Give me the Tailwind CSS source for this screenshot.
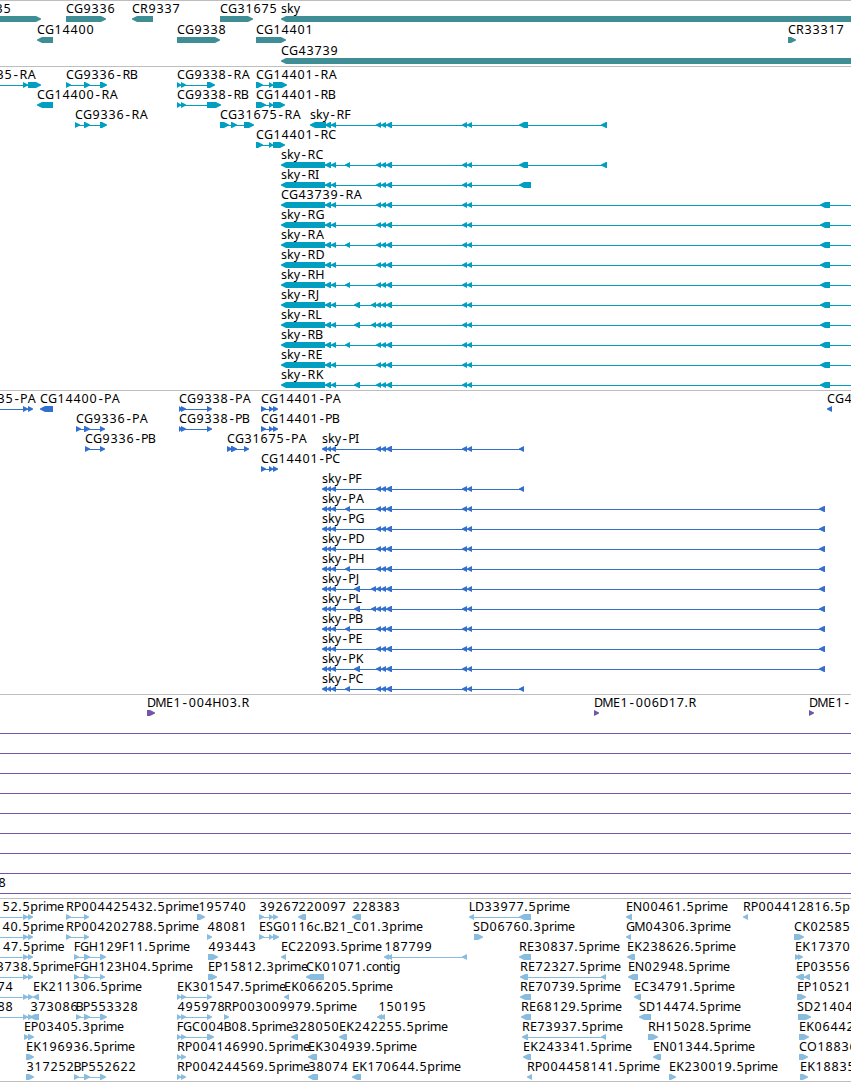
<!DOCTYPE html>
<html lang="en">
<head>
<meta charset="utf-8">
<title>Genome browser</title>
<script src="https://cdn.jsdelivr.net/npm/@tailwindcss/browser@4"></script>
</head>
<body class="bg-white overflow-hidden">
<main id="tracks" class="flex flex-col w-[851px] h-[1082px] overflow-hidden border-b border-[#bebebe] font-['Noto_Sans',sans-serif] text-[12.5px] text-black">
  <section data-track="genes" class="h-[66px] shrink-0 border-t border-[#bebebe] text-[#408e95]"></section>
  <section data-track="transcripts" class="h-[324px] shrink-0 border-t border-[#bebebe] text-[#009fc2]"></section>
  <section data-track="proteins" class="h-[304px] shrink-0 border-t border-[#bebebe] text-[#336fcd]"></section>
  <section data-track="bacs" class="h-[204px] shrink-0 border-t border-[#bebebe] text-[#7356a8]"></section>
  <section data-track="ests" class="h-[183px] shrink-0 border-t border-[#bebebe] text-[#88bddf]"></section>
</main>
<script>
// Feature format: "<strand> <label>@<x> start-end,start-end"; "~" marks a line running past the left edge, "+" past the right edge.
const T = '325-331,331-336', TRIO = '376-381,381-386,386-392', DUO = '462-467,467-472', L = '~,23-28,28-33';
const far = (n, extra = '', t2 = '') => `< ${n}@281 281-325,${T}${extra},${t2}${TRIO},${DUO},820-830,+`;
const P0 = '322-327,327-331,331-336';
const prot = (n, extra, t2, end) => `< ${n}@322 ${P0}${extra},${t2}${TRIO},${DUO},${end}`;
const A = ',345-350', B = ',354-360', C = '371-376,';
const data = {
  genes: [
    ['> 35@-5 -10-41', '> CG9336@66 66-106', '< CR9337@132 132-153', '> CG31675@220 220-253', '< sky@281 281-870'],
    ['< CG14400@37 37-53', '> CG9338@177 177-220', '> CG14401@256 256-286', '> CR33317@788 788-796'],
    ['< CG43739@281 281-870']
  ],
  transcripts: [
    ['> 35-RA@-4 ~,23-28,28-41', '> CG9336-RB@66 66-71,84-90,100-107', '> CG9338-RA@177 177-181,181-186,207-215', '> CG14401-RA@256 256-263,269-273,273-287'],
    ['< CG14400-RA@37 37-53', '> CG9338-RB@177 177-181,181-186,207-221', '> CG14401-RB@256 256-266,269-273,273-285'],
    ['> CG9336-RA@75 75-80,84-90,100-107', '> CG31675-RA@220 220-229,231-237,244-254', `< sky-RF@310 310-326,${T},${TRIO},${DUO},519-528,601-607`],
    ['> CG14401-RC@256 256-263,269-273,273-285'],
    [`< sky-RC@281 281-325,${T}${A},${TRIO},${DUO},519-528,601-607`],
    [`< sky-RI@281 281-325,${T},${TRIO},${DUO},519-531`],
    [far('CG43739-RA')], [far('sky-RG')], [far('sky-RA', A)], [far('sky-RD')], [far('sky-RH', A)],
    [far('sky-RJ', B, C)], [far('sky-RL', B, C)], [far('sky-RB', A)], [far('sky-RE')], [far('sky-RK', B)]
  ],
  proteins: [
    ['> 35-PA@-3 ' + L, '< CG14400-PA@40 40-53', '> CG9338-PA@179 179-182,181-186,207-212', '> CG14401-PA@261 261-266,269-273,273-278', '< CG4@827 827-832'],
    ['> CG9336-PA@76 76-81,84-90,100-105', '> CG9338-PB@179 179-182,181-186,207-212', '> CG14401-PB@261 261-266,269-273,273-278'],
    ['> CG9336-PB@85 85-90,100-105', '> CG31675-PA@227 227-232,231-237,244-249', prot('sky-PI', '', '', '519-524')],
    ['> CG14401-PC@261 261-266,269-273,273-278'],
    [prot('sky-PF', '', '', '519-524')],
    [prot('sky-PA', A, '', '819-825')], [prot('sky-PG', '', '', '819-825')], [prot('sky-PD', '', '', '819-825')],
    [prot('sky-PH', A, '', '819-825')], [prot('sky-PJ', B, C, '819-825')], [prot('sky-PL', B, C, '819-825')],
    [prot('sky-PB', A, '', '819-825')], [prot('sky-PE', '', '', '819-825')], [prot('sky-PK', B, '', '819-825')],
    [prot('sky-PC', A, '', '519-524')]
  ],
  bacs: [
    ['> DME1-004H03.R@147 147-155', '> DME1-006D17.R@594 594-599', '> DME1-@809 809-814'],
    ['> @0 ~,+'], ['> @0 ~,+'], ['> @0 ~,+'], ['> @0 ~,+'], ['> @0 ~,+'], ['> @0 ~,+'], ['> @0 ~,+'], ['> @0 ~,+'], ['> 8@-2 ~,+']
  ],
  ests: [
    ['> 52.5prime@2 ' + L, '> RP004425432.5prime@66 66-71,84-89', '> 195740@198 197-205', '> 39267@259 259-264,269-273,273-278', '< 220097@298 298-306', '< 228383@352 352-361', '< LD33977.5prime@469 469-474,519-531', '< EN00461.5prime@626 626-632', '< RP004412816.5p@743 743-748'],
    ['> 40.5prime@2 ' + L, '> RP004202788.5prime@66 66-71,84-89', '> 48081@207 207-212', '> ESG0116c.B21_C01.3prime@259 259-264,269-273,273-279', '> SD06760.3prime@473 474-483', '< GM04306.3prime@626 626-631', '> CK02585@794 794-804'],
    ['> 147.5prime@-5.5 ' + L, '> FGH129F11.5prime@74 74-79,84-90,100-106', '> 493443@208 208-218', '< EC22093.5prime@281 281-286', '< 187799@384 384-389,387-392,462-467', '< RE30837.5prime@519 519-531', '< EK238626.5prime@627 627-635', '> EK17370@795 795-800,798-803'],
    ['> 3738.5prime@-4 ' + L, '> FGH123H04.5prime@74 74-79,84-90,100-105', '> EP15812.3prime@208 208-217', '< CK01071.contig@306 306-324', '< RE72327.5prime@520 520-528,601-606', '< EN02948.5prime@628 628-638', '< EP03556@796 796-804,804-810'],
    ['> 74@-3 ' + L, '< EK211306.5prime@33 33-39', '> EK301547.5prime@177 177-181,181-186,207-212', '< EK066205.5prime@284 284-289', '< RE70739.5prime@520 520-531', '< EC34791.5prime@634 634-641', '> EP10521@797 797-806'],
    ['> 88@-3 ' + L, '< 373086@30 30-39', '> BP553328@76 76-81,84-90,100-107', '> 495978@177 177-181,181-186,207-212', '> RP003009979.5prime@224 224-229', '< 150195@378 377-382,380-385', '< RE68129.5prime@521 521-531', '< SD14474.5prime@639 639-651', '> SD21404@797 798-811'],
    ['> EP03405.3prime@24 24-29,28-34', '> FGC004B08.5prime@177 177-181,181-186,207-214', '< 328050@291 291-298', '< EK242255.5prime@339 339-347', '< RE73937.5prime@522 522-528,601-606', '> RH15028.5prime@648 648-658', '> EK06442@799 799-809'],
    ['> EK196936.5prime@26 26-34', '> RP004146990.5prime@177 177-181,181-186', '< EK304939.5prime@308 308-317', '< EK243341.5prime@523 523-531', '< EN01344.5prime@653 653-661', '> CO18836@799 799-808'],
    ['> 317252@26 26-34', '> BP552622@74 74-79,84-90,100-106', '> RP004244569.5prime@177 177-181,181-186', '< 38074@308 308-318', '< EK170644.5prime@352 352-361', '< RP004458141.5prime@527 527-532', '> EK230019.5prime@669 669-676', '> EK18835@800 800-808']
  ]
};
// Column width of every label character, in pixels.
const adv = {'.':4,'-':7.3,_:6,p:8,r:5,i:3,m:11,e:7,s:6,k:6.8,y:6.4,c:6,o:7,n:7,t:4,g:7,A:9,B:7,C:8,D:9,E:7,F:6,G:9,H:9,I:3,J:4,K:8,L:6,M:10,N:9,O:10,P:7,R:8,S:7};
const ctx = document.createElement('canvas').getContext('2d');
ctx.font = '12.5px "Noto Sans"';
function glyph(dir, a, b) {
  const h = Math.min(5, b - a);
  return dir === '<'
    ? `<path fill="currentColor" d="M${a} 17.5L${a + h} 15H${b}V21H${a + h}L${a} 18.5Z"/>`
    : `<path fill="currentColor" d="M${b} 17.5L${b - h} 15H${a}V21H${b - h}L${b} 18.5Z"/>`;
}
function draw(item) {
  const [, dir, label, x0, list] = item.match(/^(.) (.*)@(-?[\d.]+) (.*)$/);
  let lo = 1e4, hi = -1e4, out = '';
  for (const p of list.split(',')) {
    if (p === '~') { lo = -10; hi = Math.max(hi, -10); continue; }
    if (p === '+') { hi = 870; continue; }
    const [, a, b] = p.match(/^(-?\d+)-(\d+)$/).map(Number);
    lo = Math.min(lo, a + 2); hi = Math.max(hi, b - 2);
    out += glyph(dir, a, b);
  }
  if (list.includes(',')) out = `<rect x="${lo}" y="18" width="${hi - lo}" height="1" fill="currentColor"/>` + out;
  let x = +x0;
  const xs = [...label].map(c => {
    const w = adv[c] || 8, nat = c === '-' ? 7.5 : ctx.measureText(c).width, pos = x + (w - nat) / 2;
    x += w;
    return pos.toFixed(2);
  });
  // The monospaced face has the wide hyphen that the labels use.
  const body = label.replace('-', `<tspan class="font-['Liberation_Mono',monospace]">-</tspan>`);
  if (label) out += `<text class="fill-black" y="12" x="${xs.join(' ')}">${body}</text>`;
  return out;
}
for (const el of document.querySelectorAll('section')) {
  const tall = el.dataset.track === 'genes';
  el.innerHTML = data[el.dataset.track].map(row =>
    `<div class="${tall ? 'h-[21px]' : 'h-5'}"><svg class="block overflow-visible" width="851" height="20">${row.map(draw).join('')}</svg></div>`).join('');
}
</script>
</body>
</html>
